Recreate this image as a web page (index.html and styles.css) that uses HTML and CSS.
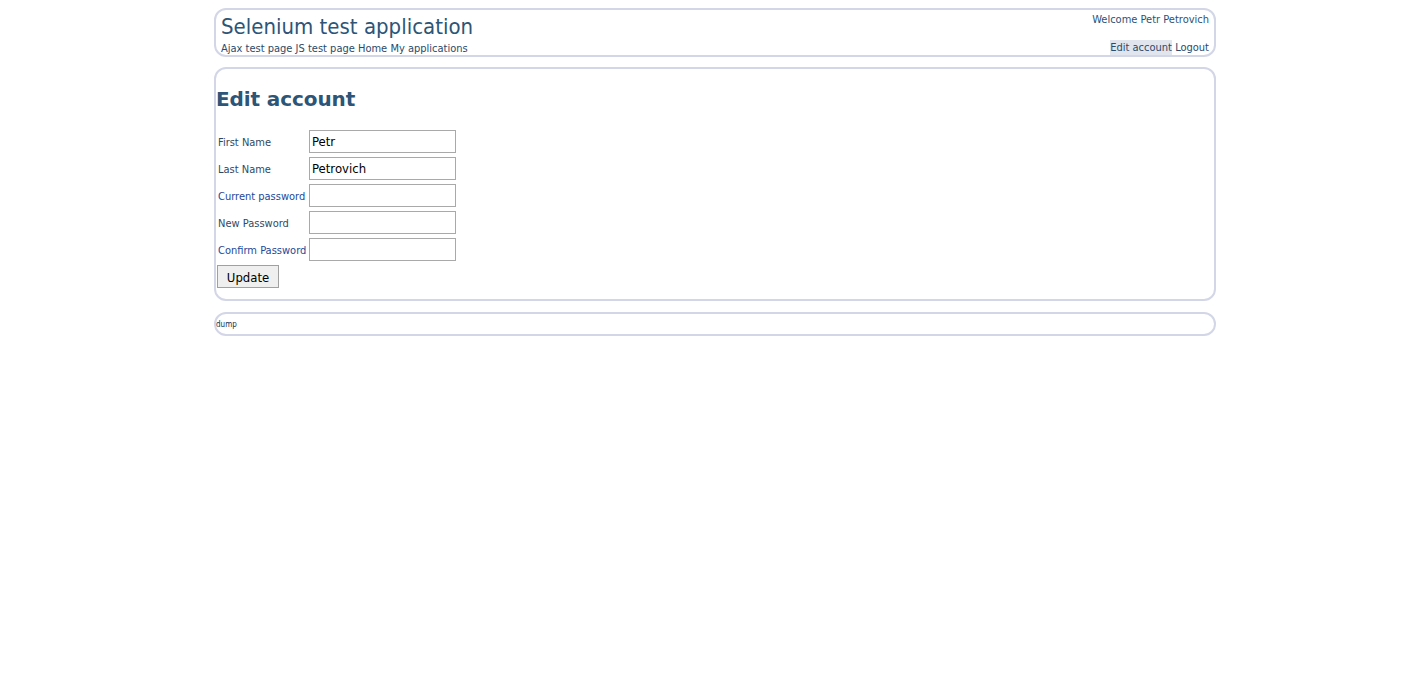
FILE: index.html
```html
<!DOCTYPE html>
<html>
<head>
<meta charset="utf-8">
<link rel="stylesheet" href="styles.css">
</head>
<body>
<div class="page">
  <div class="box header">
    <div class="hleft">
      <div class="title">Selenium test application</div>
      <div class="nav"><a>Ajax test page</a> <a>JS test page</a> <a>Home</a> <a>My applications</a></div>
    </div>
    <div class="hright">
      <div class="welcome">Welcome Petr Petrovich</div>
      <div class="nav"><a class="active">Edit account</a> <a>Logout</a></div>
    </div>
  </div>
  <div class="box main">
    <h1>Edit account</h1>
    <table class="form">
      <tr><td class="lbl">First Name</td><td><input class="inp" value="Petr"></td></tr>
      <tr><td class="lbl">Last Name</td><td><input class="inp" value="Petrovich"></td></tr>
      <tr><td class="lbl blue">Current password</td><td><input class="inp" type="password"></td></tr>
      <tr><td class="lbl">New Password</td><td><input class="inp" type="password"></td></tr>
      <tr><td class="lbl blue">Confirm Password</td><td><input class="inp" type="password"></td></tr>
    </table>
    <button class="btn">Update</button>
  </div>
  <div class="box dump">dump</div>
</div>
</body>
</html>
```
FILE: styles.css
```css
html, body { margin: 0; padding: 0; background: #fff; }
body { font-family: "DejaVu Sans Condensed", "DejaVu Sans", sans-serif; color: #2c5276; }
.page { width: 1002px; margin: 8px 0 0 calc(50% - 499px); }
.box { border: 2px solid #d3d6e6; border-radius: 12px; box-sizing: border-box; }
.header { height: 49px; display: flex; justify-content: space-between; padding: 0 5px 0 5px; }
.hleft, .hright { display: flex; flex-direction: column; justify-content: space-between; }
.hright { align-items: flex-end; padding-top: 3px; }
.title { font-family: "DejaVu Sans Condensed", "DejaVu Sans", sans-serif; font-size: 22px; line-height: 28px; padding-top: 3px; color: #2c5577; }
.nav { font-size: 11px; line-height: 15px; margin-bottom: 0; }
.nav a { color: #2c4a6a; }
.nav a.active { background: #e1e5ee; padding: 1px 0; }
.welcome { font-size: 11px; line-height: 14px; }
.main { margin-top: 10px; height: 234px; padding: 0; }
h1 { font-family: "DejaVu Sans", sans-serif; font-size: 20px; font-weight: bold; color: #2c5577; margin: 15px 0 13px 0; line-height: 30px; letter-spacing: -0.1px; }
.form { border-collapse: separate; border-spacing: 2px; margin: 0; }
.form td { padding: 1px 0; height: 23px; }
.form td.lbl { font-size: 11px; color: #2e4a66; white-space: nowrap; width: 89px; padding: 2px 0 0 0; }
.form td.lbl.blue { color: #23489a; }
.inp { width: 147px; height: 23px; box-sizing: border-box; border: 1px solid #a9a9a9; font-family: "DejaVu Sans Condensed", sans-serif; font-size: 13px; color: #000; padding: 1px 2px; margin: 0; display: block; }
.btn { margin: 1px 0 0 1px; width: 62px; height: 23px; font-family: "DejaVu Sans Condensed", sans-serif; font-size: 13px; color: #000; background: #efefef; border: 1px solid #a0a0a0; border-radius: 0; padding: 1px 0 0; }
.dump { margin-top: 11px; height: 24px; font-size: 8px; line-height: 21px; padding-left: 0; color: #1a2c44; }
```
